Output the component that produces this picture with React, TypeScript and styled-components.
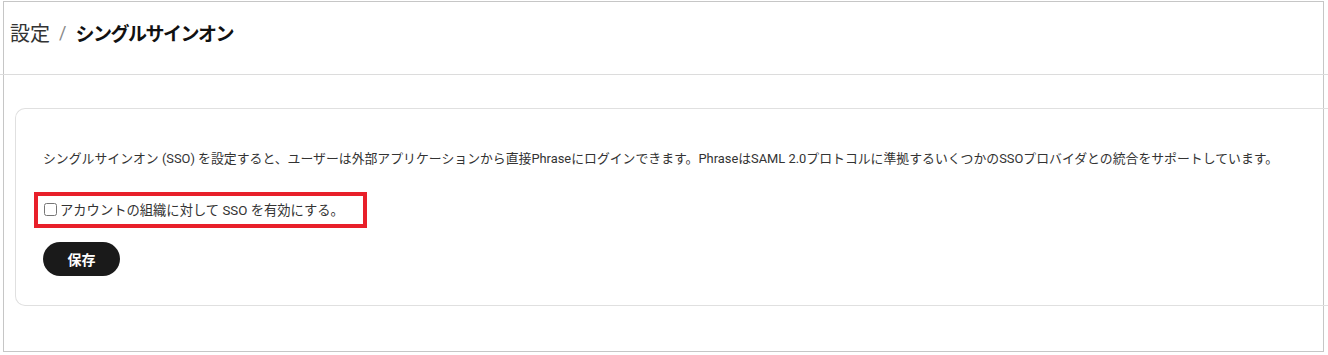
import React from "react";
import styled, { createGlobalStyle } from "styled-components";

const Global = createGlobalStyle`
  html, body {
    margin: 0;
    padding: 0;
    background: #ffffff;
  }
  body {
    font-family: "Roboto", "Noto Sans CJK JP", sans-serif;
    color: #222;
  }
`;

const Frame = styled.div`
  box-sizing: border-box;
  margin: 1px 0 0 3px;
  width: 1321px;
  height: 351px;
  border: 1px solid #c6c6c6;
`;

const Header = styled.div`
  box-sizing: border-box;
  display: flex;
  align-items: center;
  height: 73px;
  margin: 0 -10px 0 -4px;
  padding: 0 0 12px 10px;
  border-bottom: 1px solid #dcdcdc;
  font-size: 20px;
  gap: 9px;
`;

const Crumb = styled.span<{ $current?: boolean }>`
  color: ${(p) => (p.$current ? "#111" : "#333")};
  font-weight: ${(p) => (p.$current ? 700 : 400)};
  font-size: ${(p) => (p.$current ? "19px" : "20px")};
  letter-spacing: ${(p) => (p.$current ? "-1.5px" : "0")};
`;

const Slash = styled.span`
  color: #888;
  font-size: 18px;
`;

const Card = styled.div`
  box-sizing: border-box;
  margin: 33px -30px 0 11px;
  height: 198px;
  border: 1px solid #e0e0e0;
  border-right: none;
  border-radius: 10px 0 0 10px;
  padding: 40px 0 0 27px;
`;

const Description = styled.p`
  margin: 0;
  font-size: 12.87px;
  line-height: 20px;
  color: #333;
`;

const Highlight = styled.div`
  box-sizing: border-box;
  width: 333px;
  height: 36px;
  margin: 23px 0 0 -9px;
  border: 4px solid #e8202a;
  display: flex;
  align-items: center;
  padding: 0 0 2px 6px;
`;

const Label = styled.label`
  display: flex;
  align-items: center;
  font-size: 13.3px;
  color: #333;
  gap: 2px;
`;

const Box = styled.input`
  width: 13px;
  height: 13px;
  margin: 0 1px 0 0;
`;

const SaveButton = styled.button`
  margin-top: 14px;
  width: 77px;
  height: 34px;
  border: none;
  border-radius: 17px;
  background: #1a1a1a;
  color: #fff;
  font-family: "Roboto", "Noto Sans CJK JP", sans-serif;
  font-size: 14px;
  font-weight: 700;
  cursor: pointer;
`;

export default function App() {
  return (
    <>
      <Global />
      <Frame>
        <Header>
          <Crumb>設定</Crumb>
          <Slash>/</Slash>
          <Crumb $current>シングルサインオン</Crumb>
        </Header>
        <Card>
          <Description>
            シングルサインオン (SSO) を設定すると、ユーザーは外部アプリケーションから直接Phraseにログインできます。PhraseはSAML 2.0プロトコルに準拠するいくつかのSSOプロバイダとの統合をサポートしています。
          </Description>
          <Highlight>
            <Label>
              <Box type="checkbox" />
              アカウントの組織に対して SSO を有効にする。
            </Label>
          </Highlight>
          <SaveButton>保存</SaveButton>
        </Card>
      </Frame>
    </>
  );
}
